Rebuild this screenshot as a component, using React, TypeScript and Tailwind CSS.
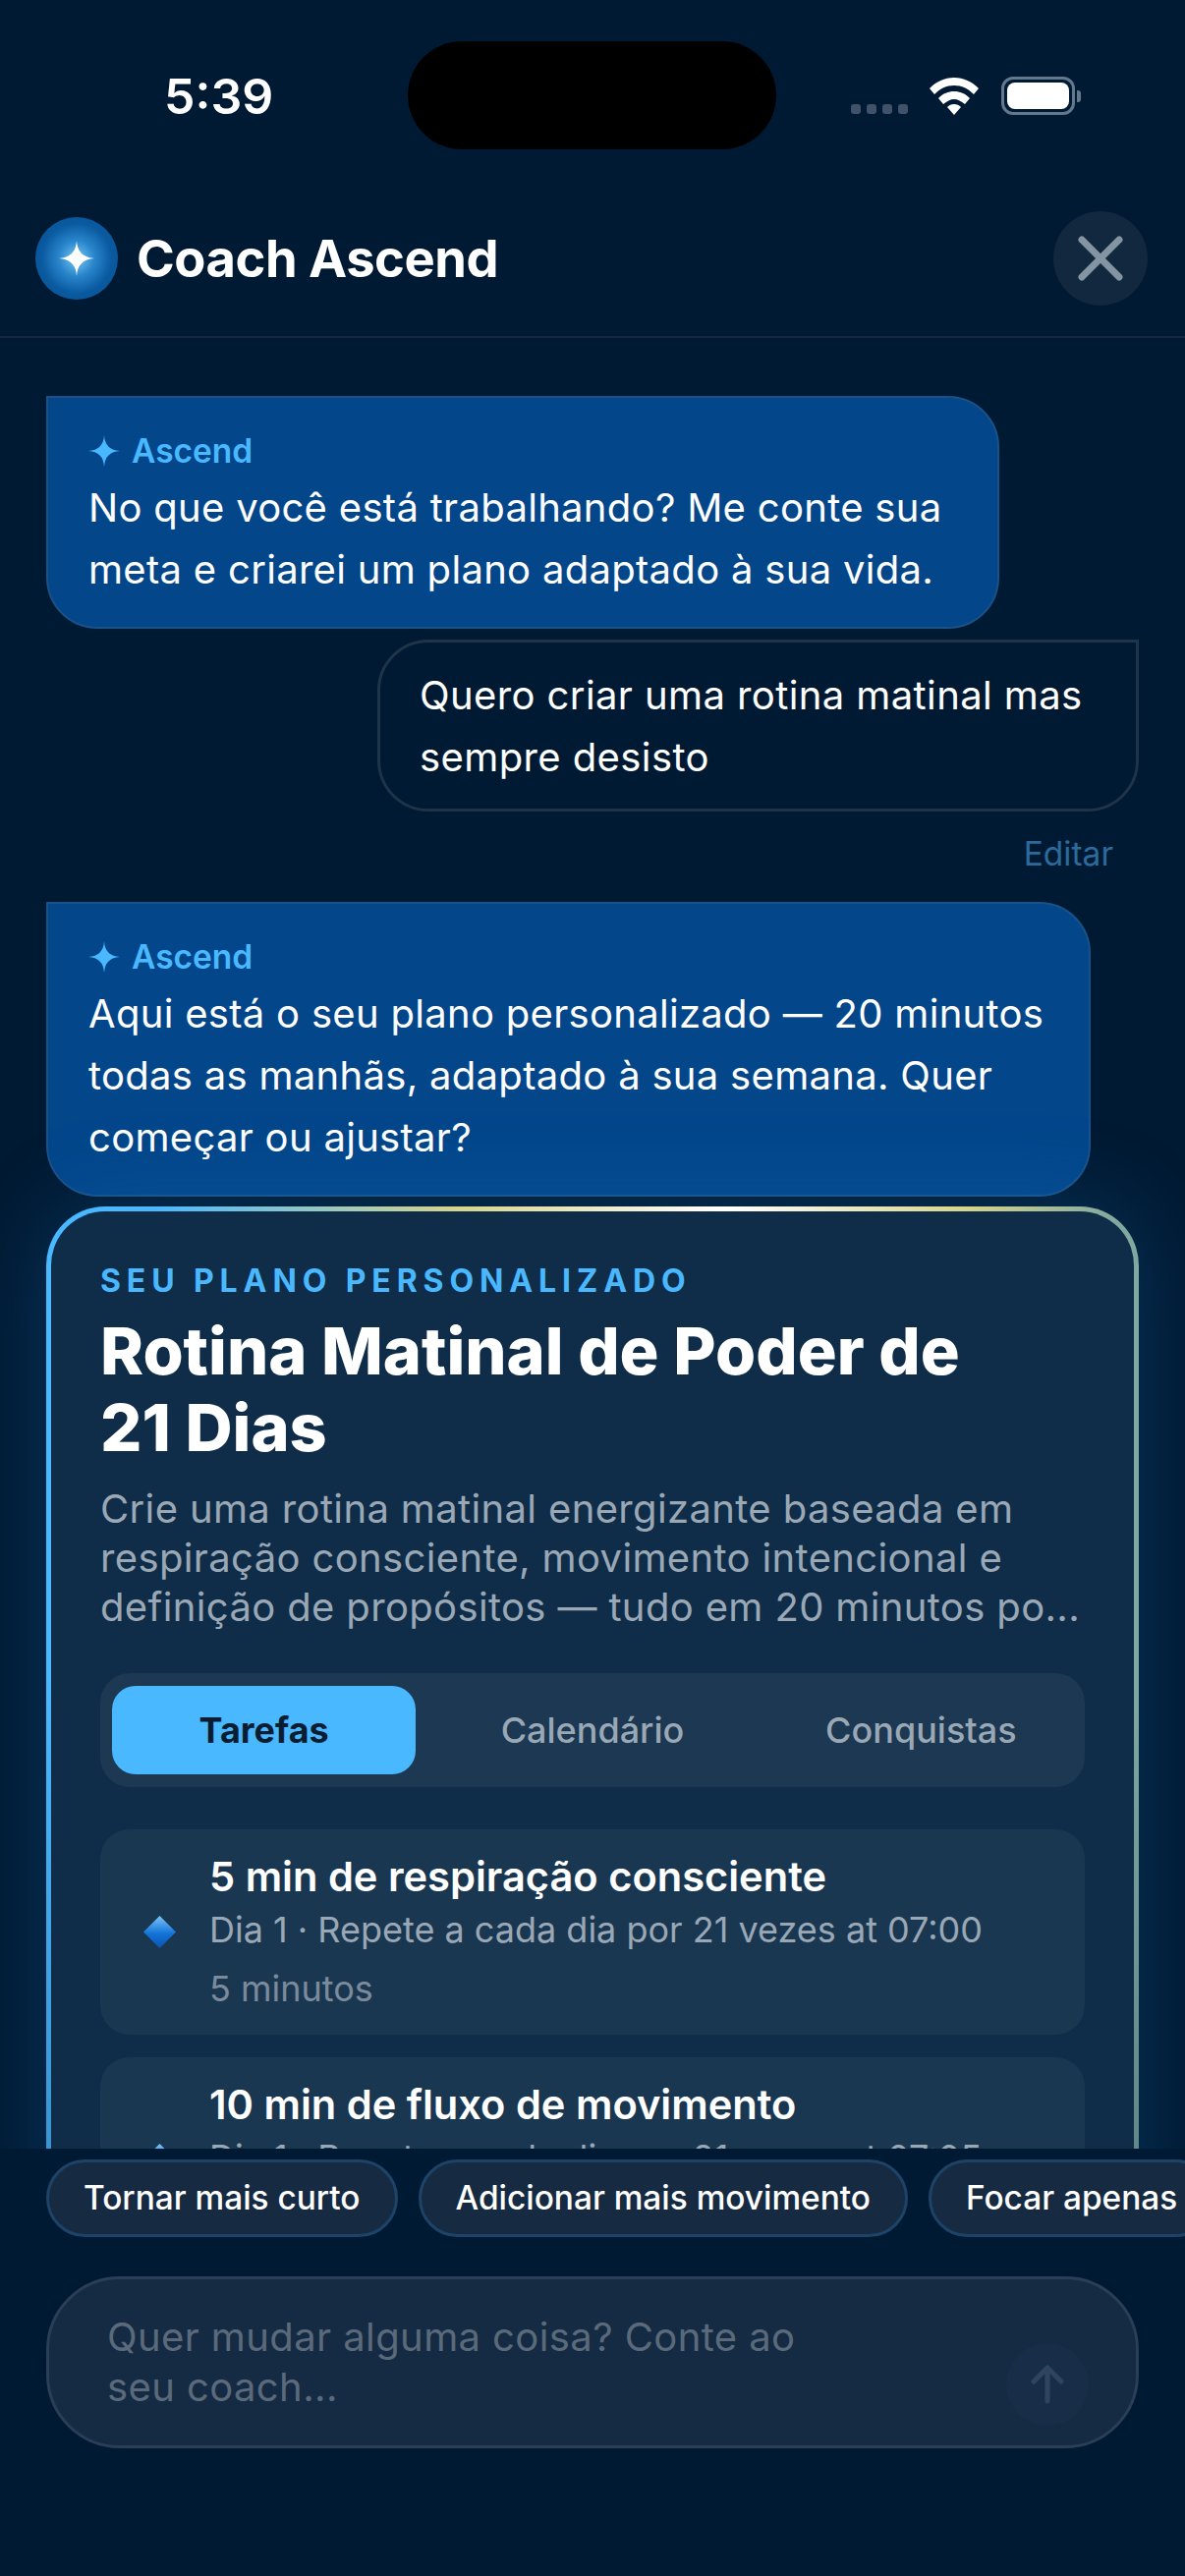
import React from 'react';
import { X } from 'lucide-react';

const Sparkle = ({ className }: { className?: string }) => (
  <svg viewBox="0 0 32 32" className={className} fill="currentColor">
    <path d="M16 0 Q16.9 15.1 32 16 Q16.9 16.9 16 32 Q15.1 16.9 0 16 Q15.1 15.1 16 0 Z" />
  </svg>
);

const Diamond = ({ id }: { id: string }) => (
  <svg viewBox="0 0 33 33" className="w-[33px] h-[33px] shrink-0">
    <defs>
      <linearGradient id={id} x1="0" y1="0" x2="0" y2="1">
        <stop offset="0" stopColor="#7cc4f5" />
        <stop offset="0.55" stopColor="#1273d8" />
        <stop offset="1" stopColor="#0a55b0" />
      </linearGradient>
    </defs>
    <path d="M16.5 0 L33 16.5 L16.5 33 L0 16.5 Z" fill={`url(#${id})`} />
  </svg>
);

const AiBubble = ({ lines, width }: { lines: string[]; width: string }) => (
  <div className={`${width} self-start rounded-[52px] rounded-tl-none bg-[#03468a] border-2 border-[#1a5288] pl-[41px] pt-[36px] pb-[27px]`}>
    <div className="flex items-center gap-[12px] h-[36px] text-[#4ab8ff]">
      <Sparkle className="w-[32px] h-[32px]" />
      <span className="text-[33.5px] font-semibold">Ascend</span>
    </div>
    <div className="mt-[8px] text-[40px] leading-[63px] tracking-[0.3px] text-white">
      {lines.map((l) => (
        <div key={l} className="whitespace-nowrap">{l}</div>
      ))}
    </div>
  </div>
);

const TaskCard = ({ id, title, sub, time }: { id: string; title: string; sub: string; time: string }) => (
  <div className="flex items-center h-[209px] shrink-0 rounded-[30px] bg-[#1a3752] pl-[44px]">
    <Diamond id={id} />
    <div className="ml-[34px]">
      <div className="text-[41.6px] leading-[50px] font-semibold text-white whitespace-nowrap">{title}</div>
      <div className="mt-[4px] text-[36px] leading-[50px] text-[#9aa8b5] whitespace-nowrap">{sub}</div>
      <div className="mt-[10px] text-[36px] leading-[50px] text-[#7b8b9b]">{time}</div>
    </div>
  </div>
);

const chips = ['Tornar mais curto', 'Adicionar mais movimento', 'Focar apenas'];

export default function App() {
  return (
    <div className="relative w-[1206px] h-[2622px] overflow-hidden bg-[#001a33] flex flex-col font-['Inter',sans-serif]">
      {/* status bar */}
      <div className="relative h-[194px] shrink-0 flex items-start justify-between pl-[167px] pr-[106px] pt-[68px]">
        <span className="text-[50px] leading-[60px] font-semibold text-white">5:39</span>
        <div className="absolute left-[415px] top-[42px] w-[375px] h-[110px] rounded-[55px] bg-black" />
        <div className="flex items-center pt-[10px]">
          <div className="flex gap-[6px] mt-[26px] mr-[22px]">
            <span className="w-[10px] h-[10px] rounded-[3px] bg-[#3f5268]" />
            <span className="w-[10px] h-[10px] rounded-[3px] bg-[#3f5268]" />
            <span className="w-[10px] h-[10px] rounded-[3px] bg-[#3f5268]" />
            <span className="w-[10px] h-[10px] rounded-[3px] bg-[#3f5268]" />
          </div>
          <svg viewBox="0 0 50 38" className="w-[50px] h-[38px]" fill="#fff">
            <path d="M25 0 C35 0 43 4 50 11 L45 17 C39 11 33 8 25 8 C17 8 11 11 5 17 L0 11 C7 4 15 0 25 0 Z" />
            <path d="M25 14 C31 14 36 16 41 21 L36 27 C32 24 29 22 25 22 C21 22 18 24 14 27 L9 21 C14 16 19 14 25 14 Z" />
            <path d="M25 27 C28 27 30 28 32 30 L25 38 L18 30 C20 28 22 27 25 27 Z" />
          </svg>
          <div className="ml-[23px] w-[75px] h-[39px] rounded-[12px] border-[3px] border-[#64788c] p-[3px]">
            <div className="w-full h-full rounded-[8px] bg-white" />
          </div>
          <div className="ml-[2px] w-[4px] h-[12px] rounded-r-[3px] bg-[#64788c]" />
        </div>
      </div>

      {/* header */}
      <div className="h-[150px] shrink-0 flex items-center justify-between pl-[36px] pr-[38px] pb-[10px] border-b-2 border-[#14293f]">
        <div className="flex items-center gap-[19px]">
          <div className="w-[84px] h-[84px] rounded-full bg-[radial-gradient(circle,#7cc8f5_0%,#2a86cc_30%,#0a5aa0_60%,#07508f_100%)] flex items-center justify-center text-white">
            <Sparkle className="w-[36px] h-[36px]" />
          </div>
          <span className="text-[52.5px] font-bold tracking-[-0.5px] text-white">Coach Ascend</span>
        </div>
        <div className="w-[96px] h-[96px] rounded-full bg-[#12283e] flex items-center justify-center">
          <X size={76} strokeWidth={2.2} className="text-[#8494a3]" />
        </div>
      </div>

      {/* messages */}
      <div className="flex-1 min-h-0 overflow-hidden flex flex-col px-[47px] pt-[59px]">
        <AiBubble width="w-[970px]" lines={['No que você está trabalhando? Me conte sua', 'meta e criarei um plano adaptado à sua vida.']} />
        <div className="mt-[11px] self-end w-[775px] h-[175px] shrink-0 rounded-[52px] rounded-tr-none border-[3px] border-[#1e3448] pl-[40px] pt-[22px] text-[40px] leading-[63px] tracking-[0.4px] text-white">
          <div className="whitespace-nowrap">Quero criar uma rotina matinal mas</div>
          <div>sempre desisto</div>
        </div>
        <div className="mt-[25px] mr-[26px] self-end text-[33.5px] leading-[36px] text-[#2c6a9c]">Editar</div>
        <div className="mt-[31px] flex flex-col">
          <AiBubble width="w-[1063px]" lines={['Aqui está o seu plano personalizado — 20 minutos', 'todas as manhãs, adaptado à sua semana. Quer', 'começar ou ajustar?']} />
        </div>

        {/* plan card */}
        <div className="mt-[10px] shrink-0 rounded-[60px] p-[5px] pb-0 bg-[linear-gradient(180deg,transparent_40%,rgba(0,30,60,0.35)_100%),linear-gradient(90deg,#4ab8ff_10%,#d8d48c_38%,#ffffff_62%,#d8d48c_84%,#7fa8a0_98%)] shadow-[0_0_90px_rgba(35,130,210,0.26)]">
          <div className="rounded-[55px] bg-[#0f2d49] h-[1200px] px-[50px] pt-[53px] flex flex-col">
            <div className="text-[32px] leading-[36px] font-bold tracking-[5.9px] text-[#4ab8ff] whitespace-nowrap">SEU PLANO PERSONALIZADO</div>
            <div className="mt-[14px] text-[66.6px] leading-[78px] font-extrabold text-white">
              <div className="whitespace-nowrap">Rotina Matinal de Poder de</div>
              <div>21 Dias</div>
            </div>
            <div className="mt-[19px] text-[40px] leading-[50px] tracking-[0.36px] text-[#9aa8b5]">
              <div className="whitespace-nowrap">Crie uma rotina matinal energizante baseada em</div>
              <div className="whitespace-nowrap">respiração consciente, movimento intencional e</div>
              <div className="whitespace-nowrap">definição de propósitos — tudo em 20 minutos po...</div>
            </div>
            <div className="mt-[42px] h-[116px] shrink-0 rounded-[30px] bg-[#1c3852] p-[12px] grid grid-cols-3 gap-[25px] items-center text-[36px] font-medium">
              <div className="h-[90px] rounded-[24px] bg-[#4ab8ff] text-[#0a1e33] font-bold flex items-center justify-center">Tarefas</div>
              <div className="text-center text-[#9aa8b5]">Calendário</div>
              <div className="text-center text-[#9aa8b5]">Conquistas</div>
            </div>
            <div className="mt-[43px] flex flex-col gap-[23px]">
              <TaskCard id="d1" title="5 min de respiração consciente" sub="Dia 1 · Repete a cada dia por 21 vezes at 07:00" time="5 minutos" />
              <TaskCard id="d2" title="10 min de fluxo de movimento" sub="Dia 1 · Repete a cada dia por 21 vezes at 07:05" time="10 minutos" />
            </div>
          </div>
        </div>
      </div>

      {/* bottom composer */}
      <div className="relative h-[435px] shrink-0 bg-[#001a33] pt-[11px]">
        <div className="flex gap-[21px] pl-[47px] overflow-hidden">
          {chips.map((c) => (
            <div key={c} className="shrink-0 h-[79px] px-[35px] rounded-[40px] bg-[#162a41] border-[3px] border-[#1d4468] flex items-center text-[33.4px] font-medium text-white whitespace-nowrap">
              {c}
            </div>
          ))}
        </div>
        <div className="relative mx-[47px] mt-[40px] h-[175px] rounded-[75px] bg-[#152a43] border-[3px] border-[#2a3f55] pl-[59px] pt-[33px] text-[40px] leading-[51px] tracking-[0.4px] text-[#5a6a7b]">
          <div>Quer mudar alguma coisa? Conte ao</div>
          <div>seu coach...</div>
          <div className="absolute right-[48px] top-[65px] w-[84px] h-[84px] rounded-full bg-[#182e48] flex items-center justify-center">
            <svg viewBox="0 0 34 40" className="w-[34px] h-[40px]" fill="none" stroke="#2e4560" strokeWidth="5" strokeLinecap="round" strokeLinejoin="round">
              <path d="M17 37 V3 M3 17 L17 3 L31 17" />
            </svg>
          </div>
        </div>
      </div>
    </div>
  );
}
